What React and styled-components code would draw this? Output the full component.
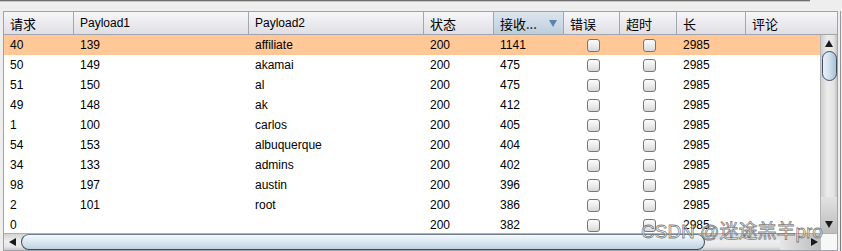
import React from "react";
import styled, { createGlobalStyle } from "styled-components";

const Global = createGlobalStyle`
  html, body { margin: 0; padding: 0; background: #eeeeee; }
  body { font-family: "Liberation Sans", "Noto Sans CJK SC", sans-serif; font-size: 12px; color: #000; }
`;

const columns = [
  { w: 70, label: "请求", key: "req" },
  { w: 175, label: "Payload1", key: "p1" },
  { w: 175, label: "Payload2", key: "p2" },
  { w: 70, label: "状态", key: "st" },
  { w: 70, label: "接收...", key: "recv", sorted: true },
  { w: 56, label: "错误", key: "err", check: true },
  { w: 57, label: "超时", key: "to", check: true },
  { w: 69, label: "长", key: "len" },
  { w: 91, label: "评论", key: "cm" },
];

const rows = [
  ["40", "139", "affiliate", "200", "1141"],
  ["50", "149", "akamai", "200", "475"],
  ["51", "150", "al", "200", "475"],
  ["49", "148", "ak", "200", "412"],
  ["1", "100", "carlos", "200", "405"],
  ["54", "153", "albuquerque", "200", "404"],
  ["34", "133", "admins", "200", "402"],
  ["98", "197", "austin", "200", "396"],
  ["2", "101", "root", "200", "386"],
  ["0", "", "", "200", "382"],
];

const gridCols = columns.map((c) => `${c.w}px`).join(" ");

const Page = styled.div`
  width: 842px;
  height: 251px;
  overflow: hidden;
  position: relative;
  display: flex;
  flex-direction: column;
`;

const TopRule = styled.div`
  width: 810px;
  height: 1px;
  background: #6e6e6e;
  border-bottom: 1px solid #c8c8c8;
  flex: none;
`;

const Frame = styled.div`
  display: flex;
  margin-top: 9px;
`;

const Panel = styled.div`
  position: relative;
  margin-left: 3px;
  width: 835px;
  height: 240px;
  box-sizing: border-box;
  border: 1px solid #a2a2aa;
  background: #fff;
  display: flex;
  flex-direction: column;
  overflow: hidden;
`;

const EdgeLine = styled.div`
  width: 1px;
  margin-left: 2px;
  height: 240px;
  background: linear-gradient(#9a9a9a, #7c7c7c);
`;

const Header = styled.div`
  display: grid;
  grid-template-columns: ${gridCols};
  height: 22px;
  border-bottom: 1px solid #a4a4ac;
  background: linear-gradient(#f7f7f9, #e9e9ee 55%, #dedee4);
  flex: none;
`;

const HeadCell = styled.div`
  position: relative;
  box-sizing: border-box;
  height: 22px;
  padding-left: 6px;
  display: flex;
  align-items: center;
  border-right: ${(p) => (p.$last ? "none" : "1px solid #a6a6ae")};
  background: ${(p) =>
    p.$sorted ? "linear-gradient(#dbe5ee, #cbd9e5 55%, #bccddb)" : "transparent"};
  font-family: "Noto Sans CJK SC", "Liberation Sans", sans-serif;
  font-size: 13px;
  white-space: nowrap;
  overflow: hidden;
`;

const LatinHead = styled.span`
  font-family: "Liberation Sans", sans-serif;
  font-size: 12px;
`;

const SortArrow = styled.span`
  position: absolute;
  right: 6px;
  top: 8px;
  width: 0;
  height: 0;
  border-left: 4px solid transparent;
  border-right: 4px solid transparent;
  border-top: 7px solid #5d83a8;
`;

const Body = styled.div`
  display: flex;
  height: 198px;
  flex: none;
`;

const RowsArea = styled.div`
  width: 816px;
  overflow: hidden;
`;

const Row = styled.div`
  display: grid;
  grid-template-columns: ${gridCols};
  height: 20px;
  background: ${(p) => (p.$selected ? "#ffc896" : "#ffffff")};
`;

const Cell = styled.div`
  display: flex;
  align-items: center;
  justify-content: ${(p) => (p.$center ? "center" : "flex-start")};
  padding-left: ${(p) => (p.$center ? "0" : "6px")};
  font-family: "Liberation Sans", sans-serif;
  font-size: 12px;
  white-space: nowrap;
  overflow: hidden;
`;

const Check = styled.span`
  width: 13px;
  height: 13px;
  box-sizing: border-box;
  border: 1px solid #767676;
  border-radius: 3px;
  background: linear-gradient(#fbfbfb, #ececec 50%, #d8d8dc);
  margin-left: 2px;
`;

const VScroll = styled.div`
  width: 17px;
  box-sizing: border-box;
  border-left: 1px solid #b4b4b4;
  background: linear-gradient(to right, #cfcfcf, #ececec 40%, #e4e4e4 80%, #c4c4c4);
  display: flex;
  flex-direction: column;
  align-items: center;
`;

const ArrowBtn = styled.div`
  width: 16px;
  height: 16px;
  flex: none;
  display: flex;
  align-items: center;
  justify-content: center;
`;

const Tri = styled.span`
  width: 0;
  height: 0;
  border-left: ${(p) => (p.$dir === "up" || p.$dir === "down" ? "4px solid transparent" : p.$dir === "right" ? "7px solid #1a1a1a" : "none")};
  border-right: ${(p) => (p.$dir === "up" || p.$dir === "down" ? "4px solid transparent" : p.$dir === "left" ? "7px solid #1a1a1a" : "none")};
  border-top: ${(p) => (p.$dir === "left" || p.$dir === "right" ? "4px solid transparent" : p.$dir === "down" ? "7px solid #1a1a1a" : "none")};
  border-bottom: ${(p) => (p.$dir === "left" || p.$dir === "right" ? "4px solid transparent" : p.$dir === "up" ? "7px solid #1a1a1a" : "none")};
`;

const VThumb = styled.div`
  width: 15px;
  height: 30px;
  box-sizing: border-box;
  border: 1px solid #3d4c5c;
  border-radius: 8px;
  background: linear-gradient(to right, #eaf2f8, #cfdfec 50%, #a9c0d4);
  flex: none;
`;

const VTrack = styled.div`
  flex: 1;
`;

const VBottom = styled.div`
  width: 16px;
  height: 36px;
  flex: none;
  background: linear-gradient(#e2e2e2, #bcbcbc);
  display: flex;
  align-items: flex-end;
  justify-content: center;
  padding-bottom: 5px;
  box-sizing: border-box;
`;

const HScroll = styled.div`
  display: flex;
  height: 17px;
  border-top: 1px solid #b0b0b0;
  box-sizing: border-box;
  background: linear-gradient(#d4d4d4, #efefef 45%, #e6e6e6 80%, #c8c8c8);
  flex: none;
`;

const HThumb = styled.div`
  width: 684px;
  height: 16px;
  box-sizing: border-box;
  border: 1px solid #3d4c5c;
  border-top-color: #6f7f8f;
  border-radius: 8px;
  background: linear-gradient(#f6fafd, #dce8f2 45%, #bfd3e3);
  margin-left: 1px;
  flex: none;
`;

const HTrack = styled.div`
  flex: 1;
`;

const HRight = styled.div`
  width: 40px;
  height: 16px;
  display: flex;
  align-items: center;
  justify-content: flex-end;
  padding-right: 2px;
  box-sizing: border-box;
  background: linear-gradient(to right, #e6e6e6, #bdbdbd);
  flex: none;
`;

const Corner = styled.div`
  width: 17px;
  height: 16px;
  border-left: 1px solid #c0c0c0;
  box-sizing: border-box;
  background: #f7f7f7;
  flex: none;
`;

const Watermark = styled.div`
  position: absolute;
  left: 637px;
  top: 204px;
  font-family: "Liberation Sans", "Noto Sans CJK SC", sans-serif;
  font-size: 19px;
  color: rgba(255, 255, 255, 0.6);
  -webkit-text-stroke: 0.8px rgba(95, 95, 95, 0.8);
  white-space: nowrap;
  pointer-events: none;
`;

const isCJK = (s) => /[\u4e00-\u9fff]/.test(s);

export default function App() {
  return (
    <>
      <Global />
      <Page>
        <TopRule />
        <Frame>
          <Panel>
            <Header>
              {columns.map((c, i) => (
                <HeadCell key={c.key} $sorted={c.sorted} $last={i === columns.length - 1}>
                  {isCJK(c.label) ? c.label : <LatinHead>{c.label}</LatinHead>}
                  {c.sorted && <SortArrow />}
                </HeadCell>
              ))}
            </Header>
            <Body>
              <RowsArea>
                {rows.map((r, ri) => (
                  <Row key={ri} $selected={ri === 0}>
                    <Cell>{r[0]}</Cell>
                    <Cell>{r[1]}</Cell>
                    <Cell>{r[2]}</Cell>
                    <Cell>{r[3]}</Cell>
                    <Cell>{r[4]}</Cell>
                    <Cell $center>
                      <Check />
                    </Cell>
                    <Cell $center>
                      <Check />
                    </Cell>
                    <Cell>2985</Cell>
                    <Cell />
                  </Row>
                ))}
              </RowsArea>
              <VScroll>
                <ArrowBtn>
                  <Tri $dir="up" />
                </ArrowBtn>
                <VThumb />
                <VTrack />
                <VBottom>
                  <Tri $dir="down" />
                </VBottom>
              </VScroll>
            </Body>
            <HScroll>
              <ArrowBtn>
                <Tri $dir="left" />
              </ArrowBtn>
              <HThumb />
              <HTrack />
              <HRight>
                <Tri $dir="right" />
              </HRight>
              <Corner />
            </HScroll>
            <Watermark>CSDN @迷途羔羊pro</Watermark>
          </Panel>
          <EdgeLine />
        </Frame>
      </Page>
    </>
  );
}
